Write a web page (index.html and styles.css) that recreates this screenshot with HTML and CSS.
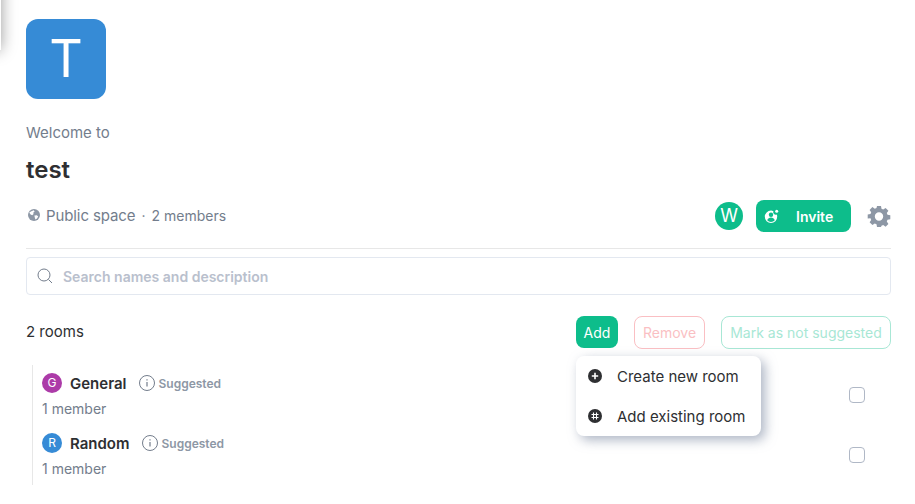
FILE: index.html
```html
<!DOCTYPE html>
<html lang="en">
<head>
    <meta charset="UTF-8">
    <meta name="viewport" content="width=device-width, initial-scale=1.0">
    <title>test</title>
    <link rel="stylesheet" href="styles.css">
</head>
<body>
    <div class="edge-panel"></div>
    <main class="space">
        <div class="space-avatar">T</div>
        <p class="welcome">Welcome to</p>
        <h1 class="space-name">test</h1>
        <div class="meta-row">
            <div class="meta">
                <svg class="globe" viewBox="0 0 12 12" width="12" height="12">
                    <circle cx="6" cy="6" r="6" fill="#8d97a5"/>
                    <path d="M1.2 3.4 3.4 2.2 5.8 1.2 6.6 2.6 5.2 3.8 5.6 5 4.2 6.2 2.6 5.4ZM6.4 6.6 8.8 6.2 10.2 7.4 9 9.6 7.4 10.6 6.8 8.6Z" fill="#fff"/>
                </svg>
                <span class="visibility">Public space</span>
                <span class="dot">·</span>
                <span class="members">2 members</span>
            </div>
            <div class="actions">
                <div class="member-avatar">W</div>
                <button class="invite">
                    <svg viewBox="0 0 16 16" width="16" height="16">
                        <path d="M7 2.600a6.200 6.200 0 1 0 6.200 6.200c0-.8-.1-1.500-.4-2.200a2.600 2.600 0 0 1-3.400-3.400 6.200 6.200 0 0 0-2.400-.6Z" fill="#fff"/>
                        <circle cx="12.700" cy="3.300" r="1.500" fill="#fff"/>
                        <circle cx="7" cy="6.700" r="2.200" fill="#0dbd8b"/>
                        <path d="M3.200 12.300c.6-1.900 2.200-2.800 3.800-2.800s3.200.9 3.800 2.800a5.300 5.300 0 0 1-7.600 0Z" fill="#0dbd8b"/>
                    </svg>
                    <span>Invite</span>
                </button>
                <svg class="gear" viewBox="0 0 24 24" width="24" height="24">
                    <path fill-rule="evenodd" d="M10 2h4l.5 2.800 1.700.7 2.400-1.600 2.800 2.800-1.600 2.400.7 1.700 2.800.5v4l-2.800.5-.7 1.700 1.600 2.400-2.800 2.800-2.400-1.600-1.700.7L14 23h-4l-.5-2.800-1.700-.7-2.400 1.600-2.800-2.800 1.600-2.400-.7-1.700L.7 14.500v-4l2.800-.5.7-1.700-1.600-2.400 2.800-2.800 2.400 1.600 1.700-.7ZM12 8.300a4.200 4.200 0 1 0 0 8.400 4.200 4.200 0 0 0 0-8.400Z" fill="#8d97a5"/>
                </svg>
            </div>
        </div>
        <div class="divider"></div>
        <div class="search">
            <svg viewBox="0 0 16 16" width="16" height="16">
                <circle cx="7" cy="7" r="6" fill="none" stroke="#737d8c" stroke-width="1"/>
                <path d="M11.500 11.500 15 15" stroke="#737d8c" stroke-width="1"/>
            </svg>
            <span>Search names and description</span>
        </div>
        <div class="rooms-bar">
            <span class="room-count">2 rooms</span>
            <div class="bar-buttons">
                <div class="add-wrap">
                    <button class="btn btn-add">Add</button>
                    <div class="menu">
                        <div class="menu-item">
                            <svg viewBox="0 0 14 14" width="14" height="14">
                                <circle cx="7" cy="7" r="7" fill="#2e2f32"/>
                                <path d="M7 3.800v6.400M3.800 7h6.400" stroke="#fff" stroke-width="1.600"/>
                            </svg>
                            <span>Create new room</span>
                        </div>
                        <div class="menu-item">
                            <svg viewBox="0 0 14 14" width="14" height="14">
                                <circle cx="7" cy="7" r="7" fill="#2e2f32"/>
                                <path d="M5.500 3.500v7M8.500 3.500v7M3.500 5.500h7M3.500 8.500h7" stroke="#fff" stroke-width="1.100"/>
                            </svg>
                            <span>Add existing room</span>
                        </div>
                    </div>
                </div>
                <button class="btn btn-remove">Remove</button>
                <button class="btn btn-mark">Mark as not suggested</button>
            </div>
        </div>
        <div class="room-list">
            <div class="room">
                <div class="room-info">
                    <div class="room-title">
                        <span class="room-avatar purple">G</span>
                        <span class="room-name">General</span>
                        <svg class="info" viewBox="0 0 16 16" width="16" height="16">
                            <circle cx="8" cy="8" r="7.500" fill="none" stroke="#737d8c"/>
                            <path d="M8 7v4.500M8 4.300v1.200" stroke="#737d8c" stroke-width="1.200"/>
                        </svg>
                        <span class="suggested">Suggested</span>
                    </div>
                    <div class="room-members">1 member</div>
                </div>
                <span class="check"></span>
            </div>
            <div class="room">
                <div class="room-info">
                    <div class="room-title">
                        <span class="room-avatar blue">R</span>
                        <span class="room-name">Random</span>
                        <svg class="info" viewBox="0 0 16 16" width="16" height="16">
                            <circle cx="8" cy="8" r="7.500" fill="none" stroke="#737d8c"/>
                            <path d="M8 7v4.500M8 4.300v1.200" stroke="#737d8c" stroke-width="1.200"/>
                        </svg>
                        <span class="suggested">Suggested</span>
                    </div>
                    <div class="room-members">1 member</div>
                </div>
                <span class="check"></span>
            </div>
        </div>
    </main>
</body>
</html>
```

FILE: styles.css
```css
html, body {
    height: 100%;
}
body {
    margin: 0;
    background: #fff;
    font-family: Inter, "Liberation Sans", sans-serif;
    color: #2e2f32;
    overflow: hidden;
}
button {
    font-family: inherit;
    cursor: pointer;
}
.edge-panel {
    position: absolute;
    left: -20px;
    top: -20px;
    width: 21px;
    height: 70px;
    background: #fff;
    box-shadow: 0 0 16px rgba(0, 0, 0, 0.4);
}
.space {
    padding: 19px 24px 0 26px;
}
.space-avatar {
    width: 80px;
    height: 80px;
    border-radius: 12px;
    background: #368bd6;
    color: #fff;
    font-size: 52px;
    line-height: 80px;
    text-align: center;
}
.welcome {
    margin: 25px 0 0;
    font-size: 15px;
    line-height: 18px;
    color: #737d8c;
}
.space-name {
    margin: 13px 0 0;
    font-size: 24px;
    font-weight: 600;
    line-height: 30px;
}
.meta-row {
    display: flex;
    justify-content: space-between;
    align-items: center;
    margin-top: 14px;
    height: 34px;
}
.meta {
    display: flex;
    align-items: center;
    padding-bottom: 2px;
    font-size: 14px;
    color: #737d8c;
}
.globe {
    margin: 0 6px 0 2px;
}
.visibility {
    font-size: 15px;
    letter-spacing: -0.1px;
}
.dot {
    margin: 0 6px;
}
.actions {
    display: flex;
    align-items: center;
}
.member-avatar {
    width: 28px;
    height: 28px;
    border-radius: 50%;
    background: #0dbd8b;
    color: #fff;
    font-size: 18px;
    line-height: 28px;
    text-align: center;
}
.invite {
    display: flex;
    align-items: center;
    width: 95px;
    height: 32px;
    margin-left: 13px;
    padding: 0 0 0 8px;
    border: 0;
    border-radius: 8px;
    background: #0dbd8b;
    color: #fff;
    font-size: 14px;
    font-weight: 600;
}
.invite span {
    margin-left: 16px;
}
.gear {
    margin-left: 16px;
}
.divider {
    height: 1px;
    margin-top: 15px;
    background: #e7e7e7;
}
.search {
    display: flex;
    align-items: center;
    gap: 10px;
    height: 36px;
    margin-top: 8px;
    padding-left: 10px;
    border: 1px solid #e3e8f0;
    border-radius: 4px;
    font-size: 14px;
    font-weight: 600;
    color: #b9c0cd;
}
.rooms-bar {
    display: flex;
    justify-content: space-between;
    align-items: center;
    margin-top: 21px;
    height: 33px;
}
.room-count {
    padding-bottom: 2px;
    font-size: 15px;
}
.bar-buttons {
    display: flex;
    gap: 16px;
}
.add-wrap {
    position: relative;
}
.btn {
    height: 33px;
    padding: 0 8px;
    border-radius: 8px;
    font-size: 14px;
    background: #fff;
}
.btn-add {
    width: 42px;
    height: 32px;
    padding: 0;
    border: 0;
    background: #0dbd8b;
    color: #fff;
}
.btn-remove {
    width: 71px;
    border: 1px solid #fabfc3;
    color: #fabfc3;
}
.btn-mark {
    width: 170px;
    border: 1px solid #a8e7d5;
    color: #a8e7d5;
}
.menu {
    position: absolute;
    left: 0;
    top: 40px;
    width: 185px;
    height: 80px;
    border-radius: 8px;
    background: #fff;
    box-shadow: 4px 4px 12px rgba(118, 131, 156, 0.6);
    font-size: 15px;
}
.menu-item {
    display: flex;
    align-items: center;
    gap: 15px;
    height: 40px;
    padding-left: 12px;
}
.room-list {
    margin: 16px 0 0 6px;
    border-left: 1px solid #e7e7e7;
}
.room {
    display: flex;
    justify-content: space-between;
    align-items: center;
    height: 60px;
    padding: 0 26px 0 9px;
}
.room-title {
    display: flex;
    align-items: center;
    height: 20px;
}
.room-avatar {
    width: 20px;
    height: 20px;
    border-radius: 50%;
    color: #fff;
    font-size: 12px;
    line-height: 20px;
    text-align: center;
}
.purple {
    background: #ac3ba8;
}
.blue {
    background: #368bd6;
}
.room-name {
    margin-left: 8px;
    font-size: 15px;
    font-weight: 600;
}
.info {
    margin-left: 12px;
}
.suggested {
    margin-left: 4px;
    font-size: 12px;
    font-weight: 600;
    color: #8d97a5;
}
.room-members {
    margin-top: 7px;
    font-size: 14px;
    line-height: 17px;
    color: #737d8c;
}
.check {
    width: 14px;
    height: 14px;
    border: 1px solid #b0b8c6;
    border-radius: 4px;
}
```
